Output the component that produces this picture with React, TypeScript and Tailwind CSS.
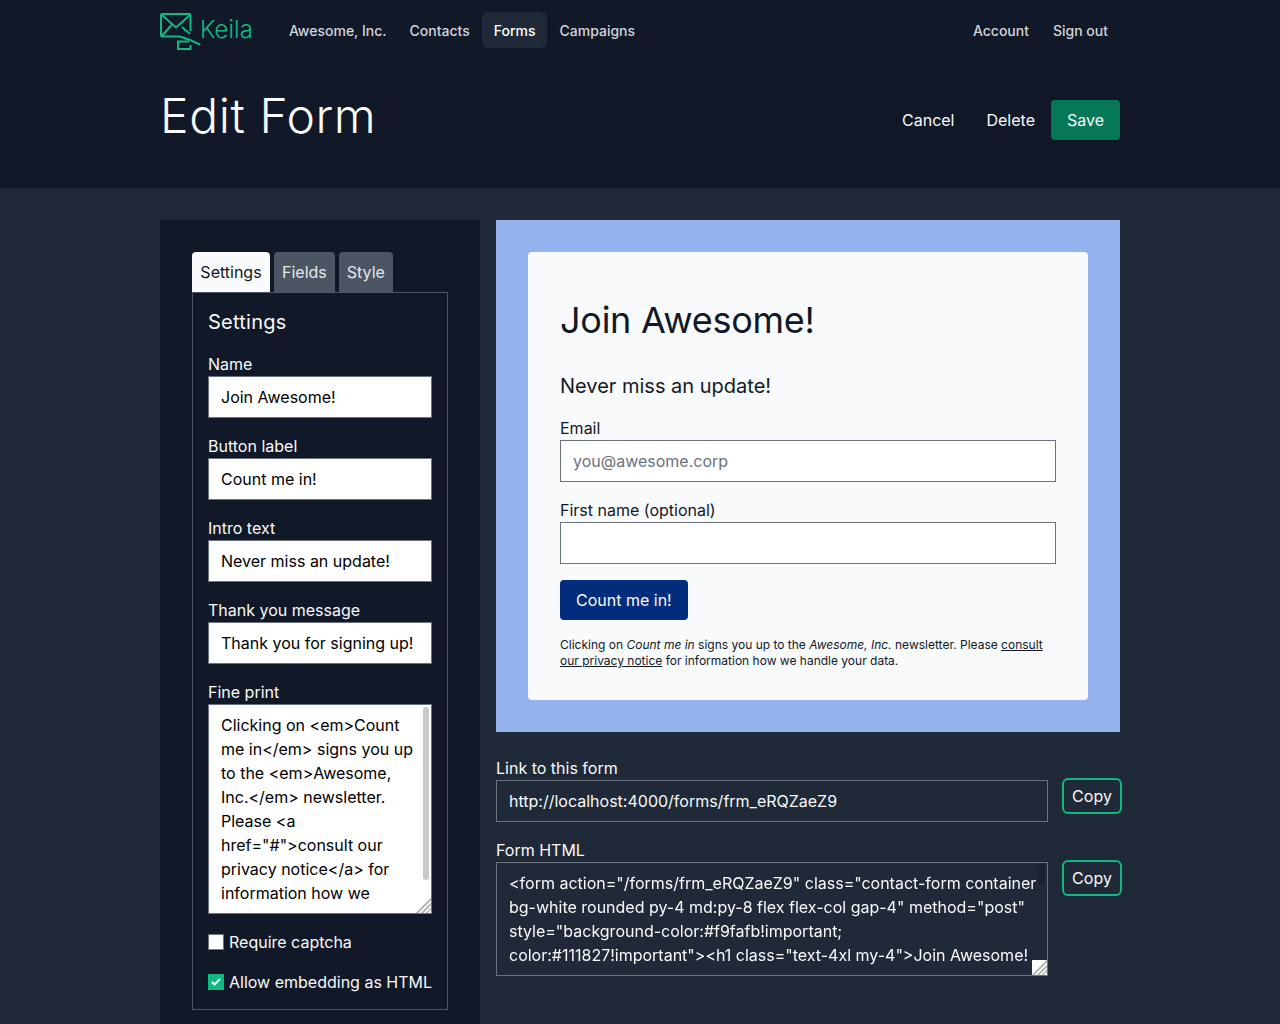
import React from "react";

const fineprint =
  'Clicking on <em>Count me in</em> signs you up to the <em>Awesome, Inc.</em> newsletter. Please <a href="#">consult our privacy notice</a> for information how we\n\nhandle your data.';

const formHtml =
  '<form action="/forms/frm_eRQZaeZ9" class="contact-form container bg-white rounded py-4 md:py-8 flex flex-col gap-4" method="post" style="background-color:#f9fafb!important; color:#111827!important"><h1 class="text-4xl my-4">Join Awesome!\n\n</h1><div class="text-xl">Never miss an update!</div><div class="flex flex-col"><label for="contact_email">Email</label><input id="contact_email" name="contact[email]" placeholder="you@awesome.corp" type="email"></div></form>';

const settingsFields = [
  { label: "Name", value: "Join Awesome!" },
  { label: "Button label", value: "Count me in!" },
  { label: "Intro text", value: "Never miss an update!" },
  { label: "Thank you message", value: "Thank you for signing up!" },
];

const resizeCorner =
  "[&::-webkit-resizer]:bg-[linear-gradient(135deg,#fff_50%,#bbb_50%,#bbb_58%,#fff_58%,#fff_66%,#bbb_66%,#bbb_74%,#fff_74%,#fff_82%,#bbb_82%,#bbb_90%,#fff_90%)]";

// drawn in page coordinates, the svg sits at (160, 10)
const Logo = () => (
  <svg width="40" height="40" viewBox="160 10 40 40" fill="none" stroke="#10b981" strokeWidth="2">
    <path d="M180 36.500H162Q161 36.500 161 35.500V15Q161 14 162 14H189.500Q190.500 14 190.500 15V31" />
    <path d="M162 15L176 27.500L190 15" />
    <path d="M162 36L172 24.500" />
    <path d="M182 27L190 34" />
    <path d="M180 36.500L190 40L200 44.500" />
    <path d="M189 41.500H178V49H190.500V45" />
    <circle cx="185" cy="30" r="1" fill="#10b981" stroke="none" />
  </svg>
);

const NavLink = ({
  children,
  active,
  className = "",
}: {
  children: React.ReactNode;
  active?: boolean;
  className?: string;
}) => (
  <a
    href="#"
    className={
      (active
        ? "px-3 pt-[9px] pb-[7px] rounded-md text-sm font-medium text-white bg-[#1f2937] "
        : "px-3 pt-[9px] pb-[7px] rounded-md text-sm font-medium text-[#d1d5db] ") + className
    }
  >
    {children}
  </a>
);

const App = () => {
  return (
    <div className="min-h-screen bg-[#1f2937] text-[#f9fafb] font-['Inter',sans-serif]">
      <div className="bg-[#111827] h-[188px]">
        <div className="w-[960px] mx-auto">
          <nav className="flex items-center justify-between h-[60px]">
            <div className="flex items-center">
              <a href="#" className="flex items-center mr-6">
                <Logo />
                <span className="text-2xl font-light text-[#10b981] pb-[1px]">Keila</span>
              </a>
              <div className="flex">
                <NavLink className="-mr-px">Awesome, Inc.</NavLink>
                <NavLink>Contacts</NavLink>
                <NavLink active>Forms</NavLink>
                <NavLink>Campaigns</NavLink>
              </div>
            </div>
            <div className="flex">
              <NavLink>Account</NavLink>
              <NavLink>Sign out</NavLink>
            </div>
          </nav>
          <div className="flex items-center justify-between pt-4">
            <h1 className="text-5xl font-light leading-[80px] tracking-[0.6px]">Edit Form</h1>
            <div className="flex items-center mt-2">
              <button className="px-4 py-2 text-base">Cancel</button>
              <button className="px-4 py-2 text-base">Delete</button>
              <button className="px-4 py-2 text-base rounded-sm bg-[#047857]">Save</button>
            </div>
          </div>
        </div>
      </div>

      <main className="w-[960px] mx-auto pt-8 flex gap-4 items-start">
        <section className="w-[320px] shrink-0 bg-[#111827] p-8">
          <div className="flex gap-1">
            <button className="h-10 w-[78px] rounded-t-sm bg-[#f9fafb] text-[#111827]">Settings</button>
            <button className="h-10 px-2 rounded-t-sm bg-[#4b5563] text-[#e5e7eb]">Fields</button>
            <button className="h-10 px-2 rounded-t-sm bg-[#4b5563] text-[#e5e7eb]">Style</button>
          </div>
          <div className="border border-[#4b5563] p-[15px]">
            <h2 className="text-xl mb-4 tracking-[0.25px]">Settings</h2>
            {settingsFields.map((f) => (
              <div key={f.label} className="mb-4">
                <label className="block">{f.label}</label>
                <input
                  readOnly
                  value={f.value}
                  className="block w-full h-[42px] px-3 bg-white text-black border border-[#6b7280] outline-none"
                />
              </div>
            ))}
            <label className="block">Fine print</label>
            <div className="relative">
              <textarea
                readOnly
                defaultValue={fineprint}
                className={
                  "block w-full h-[210px] px-3 py-2 bg-white text-black border border-[#6b7280] outline-none " +
                  resizeCorner
                }
              />
              <span className="absolute top-[3px] right-[3px] w-[6px] h-[173px] rounded-full bg-[#cacaca]" />
            </div>
            <label className="flex items-center gap-[5px] mt-4 h-6">
              <span className="w-4 h-4 bg-white border border-[#6b7280]" />
              Require captcha
            </label>
            <label className="flex items-center gap-[5px] mt-4 h-6 whitespace-nowrap">
              <span className="w-4 h-4 bg-[#10b981] flex items-center justify-center">
                <svg width="16" height="16" viewBox="0 0 16 16" fill="white">
                  <path d="M12.207 4.793a1 1 0 010 1.414l-5 5a1 1 0 01-1.414 0l-2-2a1 1 0 011.414-1.414L6.500 9.086l4.293-4.293a1 1 0 011.414 0z" />
                </svg>
              </span>
              Allow embedding as HTML
            </label>
          </div>
        </section>

        <section className="w-[624px] shrink-0">
          <div className="bg-[#93b2ee] p-8">
            <div className="bg-[#f9fafb] text-[#111827] rounded-sm px-8 pt-8 pb-[31px]">
              <h1 className="text-4xl my-4 tracking-[-0.25px]">Join Awesome!</h1>
              <div className="text-xl mt-8 mb-4">Never miss an update!</div>
              <div className="mb-4">
                <label className="block">Email</label>
                <input
                  readOnly
                  placeholder="you@awesome.corp"
                  className="block w-full h-[42px] px-3 bg-white border border-[#6b7280] outline-none placeholder:text-[#6b7280]"
                />
              </div>
              <div className="mb-4">
                <label className="block">First name (optional)</label>
                <input
                  readOnly
                  className="block w-full h-[42px] px-3 bg-white border border-[#6b7280] outline-none"
                />
              </div>
              <button className="px-4 py-2 rounded-sm bg-[#012d7c] text-[#f9fafb]">Count me in!</button>
              <p className="text-xs mt-[17px]">
                Clicking on <em>Count me in</em> signs you up to the <em>Awesome, Inc.</em> newsletter. Please{" "}
                <a href="#" className="underline">
                  consult our privacy notice
                </a>{" "}
                for information how we handle your data.
              </p>
            </div>
          </div>

          <div className="mt-6">
            <label className="block">Link to this form</label>
            <div className="flex items-start">
              <input
                readOnly
                value="http://localhost:4000/forms/frm_eRQZaeZ9"
                className="block w-[552px] shrink-0 h-[42px] px-3 bg-transparent border border-[#6b7280] outline-none"
              />
              <button className="ml-[14px] -mt-[2px] shrink-0 w-[60px] h-9 rounded-md border-2 border-[#10b981]">
                Copy
              </button>
            </div>
          </div>
          <div className="mt-4">
            <label className="block">Form HTML</label>
            <div className="flex items-start">
              <div className="relative shrink-0 w-[552px]">
                <textarea
                  readOnly
                  defaultValue={formHtml}
                  className={
                    "block w-full h-[114px] pl-3 pr-2 py-2 bg-transparent border border-[#6b7280] outline-none " +
                    resizeCorner
                  }
                />
                <span className="absolute top-[3px] right-[3px] w-[6px] h-5 rounded-full bg-[#1a2230]" />
              </div>
              <button className="ml-[14px] -mt-[2px] shrink-0 w-[60px] h-9 rounded-md border-2 border-[#10b981]">
                Copy
              </button>
            </div>
          </div>
        </section>
      </main>
    </div>
  );
};

export default App;
